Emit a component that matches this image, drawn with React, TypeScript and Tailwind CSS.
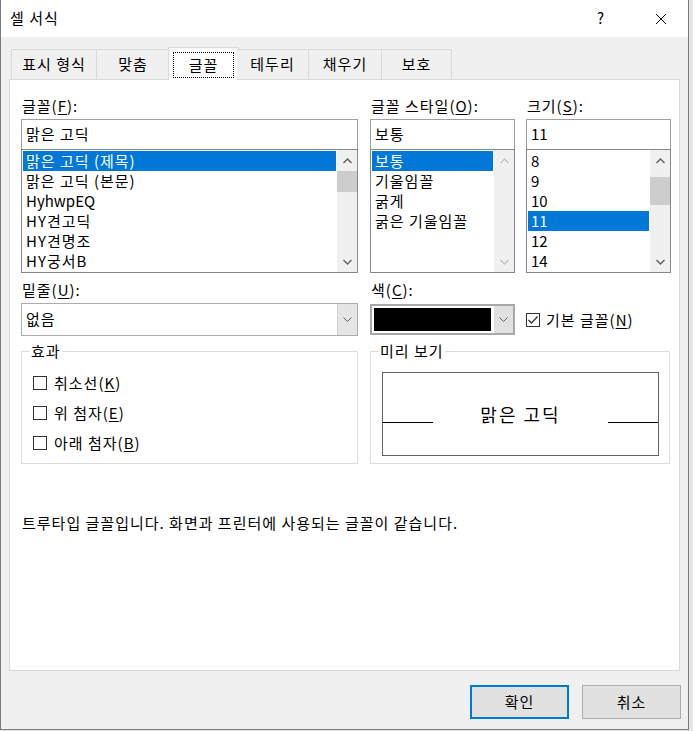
import React from 'react';

const TABS = [
  { label: '표시 형식', w: 'w-[86px]' },
  { label: '맞춤', w: 'w-[73px]' },
  { label: '글꼴', w: 'w-[71px]', active: true },
  { label: '테두리', w: 'w-[72px]' },
  { label: '채우기', w: 'w-[73px]' },
  { label: '보호', w: 'w-[70px]' },
];

const FONTS = ['맑은 고딕 (제목)', '맑은 고딕 (본문)', 'HyhwpEQ', 'HY견고딕', 'HY견명조', 'HY궁서B'];
const STYLES = ['보통', '기울임꼴', '굵게', '굵은 기울임꼴'];
const SIZES = ['8', '9', '10', '11', '12', '14'];

// latin-only strings keep the font's own spacing
const isLatin = (s: string) => /^[A-Za-z0-9 ]+$/.test(s);

const Chevron = ({ up = false, disabled = false }: { up?: boolean; disabled?: boolean }) => (
  <svg width="9" height="6" viewBox="0 0 9 6" className="block">
    <polyline
      points={up ? '0.5,5 4.5,1 8.5,5' : '0.5,1 4.5,5 8.5,1'}
      fill="none"
      stroke={disabled ? '#c3c3c3' : '#606060'}
      strokeWidth="1.4"
    />
  </svg>
);

// the thin chevron used on combo box buttons
const ComboArrow = () => (
  <svg width="9" height="5" viewBox="0 0 9 5" className="block">
    <polyline points="0.5,0.5 4.5,4.5 8.5,0.5" fill="none" stroke="#606060" strokeWidth="1" />
  </svg>
);

const Label = ({ text, hot, rest = ':' }: { text: string; hot: string; rest?: string }) => (
  <div className="h-[20px] leading-[20px] pl-[1px]">
    {text}(<u className="underline-offset-2">{hot}</u>){rest}
  </div>
);

const Scrollbar = ({ thumbTop, thumbH, disabled = false }: { thumbTop: string; thumbH: string; disabled?: boolean }) => (
  <div className="w-[20px] h-full bg-[#f0f0f0] flex flex-col">
    <div className="h-[21px] flex items-center justify-center">
      <Chevron up disabled={disabled} />
    </div>
    <div className="flex-1">
      {!disabled && <div className={`bg-[#cdcdcd] ${thumbTop} ${thumbH}`} />}
    </div>
    <div className="h-[21px] flex items-center justify-center">
      <Chevron disabled={disabled} />
    </div>
  </div>
);

const ListBox = ({
  items,
  selected,
  thumbTop,
  thumbH,
  disabled,
}: {
  items: string[];
  selected: number;
  thumbTop: string;
  thumbH: string;
  disabled?: boolean;
}) => (
  <div className="h-[124px] border border-[#828790] bg-white flex">
    <div className="flex-1 pt-[1px] pl-[1px] pr-[1px] overflow-hidden">
      {items.map((it, i) => (
        <div
          key={it}
          className={`h-[20px] leading-[20px] pl-[3px] whitespace-nowrap ${isLatin(it) ? 'tracking-normal' : ''} ${
            i === selected ? 'bg-[#0078d7] text-white' : ''
          }`}
        >
          {it}
        </div>
      ))}
    </div>
    <Scrollbar thumbTop={thumbTop} thumbH={thumbH} disabled={disabled} />
  </div>
);

const TextBox = ({ value }: { value: string }) => (
  <div className={`h-[30px] border border-[#a0a0a0] border-b-0 bg-white pl-[4px] flex items-center ${isLatin(value) ? 'tracking-normal' : ''}`}>
    {value}
  </div>
);

const CheckBox = ({ checked = false }: { checked?: boolean }) => (
  <div className="w-[14px] h-[14px] border border-[#333333] bg-white flex items-center justify-center shrink-0">
    {checked && (
      <svg width="12" height="12" viewBox="0 0 12 12">
        <polyline points="1.5,6 4.5,9 10.5,2.5" fill="none" stroke="#333333" strokeWidth="1.3" />
      </svg>
    )}
  </div>
);

export default function FormatCellsDialog() {
  return (
    <div className="w-[693px] h-[731px] bg-[#e4e4e4] font-['Noto_Sans_CJK_KR','Noto_Sans',sans-serif] text-[15px] tracking-[1px] text-black">
      <div className="w-[689px] h-[730px] border-l border-r border-b border-[#7a7a7a] bg-[#f0f0f0] flex flex-col">
        {/* TITLE BAR */}
        <div className="h-[37px] bg-white flex items-center shrink-0">
          <span className="pl-[9px] flex-1">셀 서식</span>
          <span className="w-[14px] text-center">?</span>
          <span className="w-[47px]" />
          <svg width="12" height="12" viewBox="0 0 12 12" className="block">
            <path d="M1 1 L11 11 M11 1 L1 11" stroke="#000" strokeWidth="1" fill="none" />
          </svg>
          <span className="w-[21px]" />
        </div>

        <div className="pl-[8px] pt-[10px] flex flex-col">
          {/* TABS */}
          <div className="flex items-end ml-[2px] -mb-[1px] relative z-10">
            {TABS.map((t) =>
              t.active ? (
                <div key={t.label} className={`${t.w} h-[33px] -mx-[2px] bg-white border border-b-0 border-[#d9d9d9] p-[4px] pb-[2px]`}>
                  <div className="h-full border border-dotted border-black flex items-center justify-center">{t.label}</div>
                </div>
              ) : (
                <div
                  key={t.label}
                  className={`${t.w} h-[31px] border border-[#d9d9d9] border-l-0 first:border-l bg-[#f0f0f0] flex items-center justify-center pb-[1px]`}
                >
                  {t.label}
                </div>
              )
            )}
          </div>

          {/* PANEL */}
          <div className="w-[671px] h-[592px] bg-white border border-[#d9d9d9] pl-[11px] pt-[16px] flex flex-col">
            <div className="flex">
              <div className="w-[337px]">
                <Label text="글꼴" hot="F" />
                <div className="mt-[3px]">
                  <TextBox value="맑은 고딕" />
                  <ListBox items={FONTS} selected={0} thumbTop="mt-0" thumbH="h-[21px]" />
                </div>
              </div>
              <div className="w-[145px] ml-[12px]">
                <Label text="글꼴 스타일" hot="O" />
                <div className="mt-[3px]">
                  <TextBox value="보통" />
                  <ListBox items={STYLES} selected={0} thumbTop="mt-0" thumbH="h-0" disabled />
                </div>
              </div>
              <div className="w-[145px] ml-[11px]">
                <Label text="크기" hot="S" />
                <div className="mt-[3px]">
                  <TextBox value="11" />
                  <ListBox items={SIZES} selected={3} thumbTop="mt-[6px]" thumbH="h-[28px]" />
                </div>
              </div>
            </div>

            {/* UNDERLINE / COLOR */}
            <div className="flex mt-[7px]">
              <div className="w-[337px]">
                <Label text="밑줄" hot="U" />
                <div className="mt-[3px] h-[33px] border border-[#acacac] bg-white flex">
                  <div className="flex-1 pl-[4px] flex items-center">없음</div>
                  <div className="w-[20px] bg-[#e5e5e5] border-l border-[#cfcfcf] flex items-center justify-center">
                    <ComboArrow />
                  </div>
                </div>
              </div>
              <div className="w-[145px] ml-[12px]">
                <Label text="색" hot="C" />
                <div className="mt-[4px] h-[31px] border-2 border-[#a8a8a8] bg-white flex">
                  <div className="flex-1 p-[2px] pr-[3px]">
                    <div className="h-full bg-black" />
                  </div>
                  <div className="w-[19px] bg-[#e1e1e1] flex items-center justify-center">
                    <ComboArrow />
                  </div>
                </div>
              </div>
              <div className="ml-[11px] pt-[24px] flex items-center h-[56px] gap-[6px]">
                <CheckBox checked />
                <span>
                  기본 글꼴(<u className="underline-offset-2">N</u>)
                </span>
              </div>
            </div>

            {/* EFFECTS / PREVIEW */}
            <div className="flex mt-[5px]">
              <fieldset className="w-[337px] border border-[#dcdcdc] pl-[8px] pb-[5px]">
                <legend className="px-[1px] leading-[20px]">효과</legend>
                <div className="pt-[7px] pl-[3px]">
                  {[
                    ['취소선', 'K'],
                    ['위 첨자', 'E'],
                    ['아래 첨자', 'B'],
                  ].map(([t, k]) => (
                    <div key={k} className="h-[30px] flex items-center gap-[7px]">
                      <CheckBox />
                      <span>
                        {t}(<u className="underline-offset-2">{k}</u>)
                      </span>
                    </div>
                  ))}
                </div>
              </fieldset>
              <fieldset className="w-[300px] ml-[12px] border border-[#dcdcdc] pl-[8px] pr-[10px] pb-[7px]">
                <legend className="px-[1px] leading-[20px]">미리 보기</legend>
                <div className="mt-[11px] ml-[3px] h-[84px] border border-[#646464] flex items-center">
                  <div className="w-[50px] h-px bg-black mt-[16px]" />
                  <div className="flex-1 text-center text-[18px] tracking-[2px]">맑은 고딕</div>
                  <div className="w-[50px] h-px bg-black mt-[16px]" />
                </div>
              </fieldset>
            </div>

            <div className="mt-[49px] h-[20px] leading-[20px] pl-[1px]">
              트루타입 글꼴입니다. 화면과 프린터에 사용되는 글꼴이 같습니다.
            </div>
          </div>

          {/* BUTTONS */}
          <div className="flex justify-end gap-[13px] mt-[14px] pr-[7px]">
            <button className="w-[99px] h-[34px] bg-[#e1e1e1] border-2 border-[#0078d7]">확인</button>
            <button className="w-[99px] h-[34px] bg-[#e1e1e1] border border-[#adadad]">취소</button>
          </div>
        </div>
      </div>
    </div>
  );
}
